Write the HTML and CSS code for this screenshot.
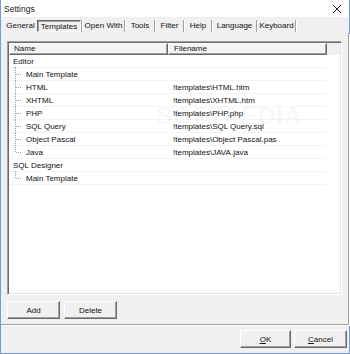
FILE: index.html
```html
<!DOCTYPE html>
<html>
<head>
<meta charset="utf-8">
<link rel="stylesheet" href="styles.css">
</head>
<body>
<div class="window">
  <div class="titlebar">
    <span class="title">Settings</span>
    <svg class="close" width="10" height="10" viewBox="0 0 10 10"><path d="M1 1 L9 9 M9 1 L1 9" stroke="#222" stroke-width="1" fill="none"/></svg>
  </div>
  <div class="tabs">
    <span class="tab t-general">General</span>
    <span class="tab t-templates active">Templates</span>
    <span class="sep"></span>
    <span class="tab t-open">Open With</span>
    <span class="sep"></span>
    <span class="tab t-tools">Tools</span>
    <span class="sep"></span>
    <span class="tab t-filter">Filter</span>
    <span class="sep"></span>
    <span class="tab t-help">Help</span>
    <span class="sep"></span>
    <span class="tab t-lang">Language</span>
    <span class="sep"></span>
    <span class="tab t-key">Keyboard</span>
    <span class="sep"></span>
  </div>
  <div class="panel">
    <div class="list">
      <div class="header">
        <div class="hcell hname">Name</div>
        <div class="hcell hfile">Filename</div>
        <div class="hfill"></div>
      </div>
      <div class="rows">
        <div class="row"><span class="name top">Editor</span><span class="file"></span></div>
        <div class="row child"><span class="name">Main Template</span><span class="file"></span></div>
        <div class="row child"><span class="name">HTML</span><span class="file">!templates\HTML.htm</span></div>
        <div class="row child"><span class="name">XHTML</span><span class="file">!templates\XHTML.htm</span></div>
        <div class="row child"><span class="name">PHP</span><span class="file">!templates\PHP.php</span></div>
        <div class="row child"><span class="name">SQL Query</span><span class="file">!templates\SQL Query.sql</span></div>
        <div class="row child"><span class="name">Object Pascal</span><span class="file">!templates\Object Pascal.pas</span></div>
        <div class="row child last"><span class="name">Java</span><span class="file">!templates\JAVA.java</span></div>
        <div class="row"><span class="name top">SQL Designer</span><span class="file"></span></div>
        <div class="row child last"><span class="name">Main Template</span><span class="file"></span></div>
      </div>
      <div class="watermark">SOFTPEDIA</div>
    </div>
    <div class="btnrow">
      <button class="btn">Add</button>
      <button class="btn">Delete</button>
    </div>
  </div>
  <div class="footer">
    <button class="btn"><u>O</u>K</button>
    <button class="btn cancel"><u>C</u>ancel</button>
  </div>
</div>
</body>
</html>
```
FILE: styles.css
```css
* { box-sizing: border-box; }
html, body { margin: 0; padding: 0; }
body {
  width: 350px;
  height: 354px;
  background: #f0f0f0;
  font-family: "Liberation Sans", Arial, sans-serif;
  font-size: 8px;
  color: #111;
  overflow: hidden;
}
.window {
  width: 350px;
  height: 354px;
  border-left: 1px solid #6f9fd6;
  border-right: 1px solid #6f9fd6;
  border-bottom: 1px solid #6f9fd6;
  display: flex;
  flex-direction: column;
}
.titlebar {
  height: 17px;
  background: #fff;
  display: flex;
  align-items: center;
  justify-content: space-between;
  padding: 0 7px 0 3px;
}
.title { font-size: 8.5px; color: #222; }
.close { display: block; }
.tabs {
  height: 16px;
  display: flex;
  align-items: center;
  padding: 1px 0 0 3px;
  white-space: nowrap;
}
.tab {
  height: 12px;
  line-height: 11px;
  padding: 0;
  text-align: center;
  color: #111;
  white-space: nowrap;
  flex: none;
}
.tab.active {
  border-top: 1px solid #696969;
  border-left: 1px solid #696969;
  border-bottom: 1px solid #fff;
  border-right: 1px solid #fff;
  box-shadow: inset 1px 1px 0 #a0a0a0;
  background: #f0f0f0;
}
.t-general { width: 33px; }
.t-templates { width: 44px; }
.t-open { width: 41px; }
.t-tools { width: 28px; }
.t-filter { width: 27px; }
.t-help { width: 26px; }
.t-lang { width: 43px; }
.t-key { width: 37px; }
.sep {
  flex: none;
  width: 2px;
  height: 12px;
  border-left: 1px solid #a0a0a0;
  border-right: 1px solid #fff;
}
.panel {
  height: 292px;
  border-right: 1px solid #a0a0a0;
  border-bottom: 1px solid #a0a0a0;
  box-shadow: 1px 1px 0 #fff;
  padding: 8px 6px 0 6px;
  display: flex;
  flex-direction: column;
}
.list {
  position: relative;
  height: 254px;
  background: #fff;
  border-top: 1px solid #a0a0a0;
  border-left: 1px solid #a0a0a0;
  border-bottom: 1px solid #fff;
  border-right: 1px solid #fff;
  box-shadow: inset 1px 1px 0 #696969, inset -1px -1px 0 #e3e3e3;
  padding: 1px;
  overflow: hidden;
}
.header {
  display: flex;
  height: 12px;
}
.hcell {
  background: #f4f4f4;
  border-top: 1px solid #fff;
  border-left: 1px solid #fff;
  border-right: 1px solid #696969;
  border-bottom: 1px solid #696969;
  box-shadow: inset -1px -1px 0 #a0a0a0;
  line-height: 10px;
  padding-left: 4px;
  color: #111;
}
.hname { width: 159px; }
.hfile { width: 159px; padding-left: 5px; }
.hfill { flex: 1; background: #f0f0f0; }
.rows { display: flex; flex-direction: column; }
.row {
  position: relative;
  display: flex;
  height: 13px;
  width: 318px;
  align-items: center;
  border-bottom: 1px solid #f4f4f4;
}
.name { width: 159px; padding-left: 4px; }
.row.child .name { padding-left: 17px; }
.file { padding-left: 5px; }
.row.child::before {
  content: "";
  position: absolute;
  left: 6px;
  top: -1px;
  height: 14px;
  border-left: 1px dotted #a0a0a0;
}
.row.child.last::before { height: 7px; }
.row.child::after {
  content: "";
  position: absolute;
  left: 7px;
  top: 6px;
  width: 5px;
  border-top: 1px dotted #a0a0a0;
}
.watermark {
  position: absolute;
  left: 148px;
  top: 60px;
  font-size: 24px;
  letter-spacing: 1px;
  color: rgba(0,0,0,0.035);
  font-weight: bold;
  pointer-events: none;
}
.btnrow {
  display: flex;
  gap: 4px;
  padding-top: 6px;
}
.btn {
  font-family: "Liberation Sans", Arial, sans-serif;
  font-size: 8px;
  color: #111;
  width: 53px;
  height: 18px;
  padding: 0;
  background: #f0f0f0;
  border-top: 1px solid #fff;
  border-left: 1px solid #fff;
  border-right: 1px solid #696969;
  border-bottom: 1px solid #696969;
  box-shadow: inset -1px -1px 0 #a0a0a0;
}
.footer {
  display: flex;
  justify-content: flex-end;
  gap: 3px;
  padding: 5px 2px 0 0;
}
.footer .btn { width: 51px; }
.footer .cancel { width: 53px; }
```
